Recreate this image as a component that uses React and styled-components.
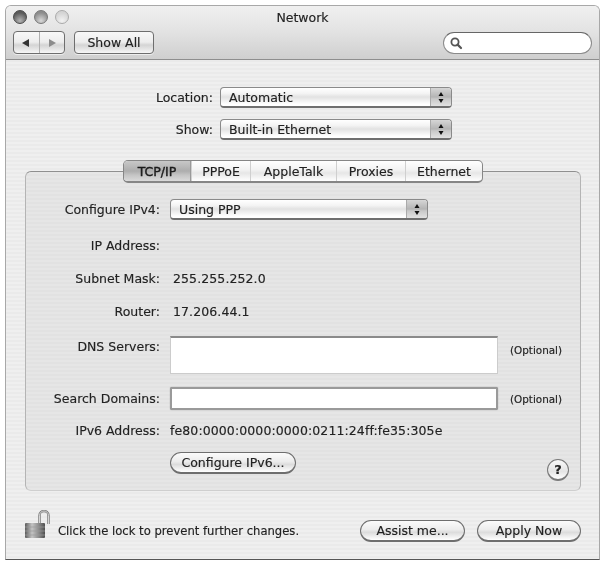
import React from "react";
import styled, { createGlobalStyle } from "styled-components";

const Global = createGlobalStyle`
  html, body { margin: 0; padding: 0; background: #fff; }
  body { font-family: "DejaVu Sans", "Liberation Sans", sans-serif; font-size: 12px; color: #222; -webkit-text-stroke: 0.15px #222; }
`;

const Page = styled.div`
  width: 604px;
  height: 562px;
  padding: 5px 4px 0 5px;
  box-sizing: border-box;
  overflow: hidden;
  filter: blur(0.45px);
`;

const Window = styled.div`
  width: 595px;
  height: 555px;
  box-sizing: border-box;
  border: 1px solid #a8a8a8;
  border-bottom-color: #555;
  border-radius: 6px 6px 0 0;
  display: flex;
  flex-direction: column;
  background: repeating-linear-gradient(#efefef 0 2px, #eaeaea 2px 4px);
`;

const TitleBar = styled.div`
  height: 54px;
  flex: none;
  box-sizing: border-box;
  padding: 3px 7px 0 7px;
  border-bottom: 1px solid #8e8e8e;
  border-radius: 5px 5px 0 0;
  background: linear-gradient(#f0f0f0, #e2e2e2 50%, #cfcfcf);
`;

const TitleRow = styled.div`
  display: grid;
  grid-template-columns: 1fr auto 1fr;
  align-items: center;
  height: 16px;
`;

const Lights = styled.div`
  display: flex;
  gap: 7px;
`;

const Light = styled.span`
  width: 14px;
  height: 14px;
  border-radius: 50%;
  box-sizing: border-box;
  border: 1px solid ${p => p.$edge};
  background: radial-gradient(circle at 50% 80%, ${p => p.$glow}, ${p => p.$tone} 70%);
`;

const Title = styled.div`
  font-size: 12.5px;
`;

const ToolRow = styled.div`
  display: flex;
  align-items: center;
  margin-top: 6px;
`;

const ToolButton = styled.div`
  height: 23px;
  box-sizing: border-box;
  border: 1px solid #6e6e6e;
  border-radius: 4px;
  background: linear-gradient(#f8f8f8, #ededed 48%, #d4d4d4 62%, #f6f6f6);
  display: flex;
  align-items: center;
  justify-content: center;
  box-shadow: 0 1px 0 rgba(255,255,255,.6);
  font-size: 12.5px;
`;

const NavButton = styled(ToolButton)`
  width: 52px;
`;

const NavPart = styled.span`
  flex: 1;
  height: 100%;
  display: flex;
  align-items: center;
  justify-content: center;
  & + & { border-left: 1px solid #b0b0b0; }
`;

const ShowAll = styled(ToolButton)`
  width: 80px;
  margin-left: 9px;
`;

const SearchField = styled.div`
  width: 149px;
  height: 22px;
  margin-left: auto;
  box-sizing: border-box;
  border: 1px solid #8a8a8a;
  border-top-color: #666;
  border-radius: 11px;
  background: #fff;
  display: flex;
  align-items: center;
  padding-left: 5px;
`;

const Content = styled.div`
  flex: 1;
  display: flex;
  flex-direction: column;
  min-height: 0;
`;

const TopForm = styled.div`
  padding-top: 27px;
  display: flex;
  flex-direction: column;
  gap: 11px;
`;

const TopRow = styled.div`
  display: grid;
  grid-template-columns: 207px auto;
  column-gap: 7px;
  align-items: center;
  justify-content: start;
  height: 21px;
`;

const TopLabel = styled.label`
  text-align: right;
  font-size: 12.5px;
  white-space: nowrap;
`;

const Select = styled.div`
  width: ${p => p.$w}px;
  height: 21px;
  box-sizing: border-box;
  border: 1px solid #8a8a8a;
  border-bottom: 2px solid #6f6f6f;
  border-radius: 4px;
  display: flex;
  align-items: center;
  padding-left: 8px;
  background: linear-gradient(#ffffff, #f4f4f4 30%, #e2e2e2 50%, #ffffff 90%);
  position: relative;
  overflow: hidden;
  font-size: 12.5px;
`;

const Stepper = styled.span`
  position: absolute;
  right: 0;
  top: 0;
  bottom: 0;
  width: 20px;
  border-left: 1px solid #aaa;
  background: linear-gradient(#d6d6d6, #b4b4b4 50%, #c8c8c8 60%, #e2e2e2);
  display: flex;
  align-items: center;
  justify-content: center;
`;

const Panel = styled.div`
  margin: 31px 18px 0 19px;
  height: 320px;
  box-sizing: border-box;
  border: 1px solid #b4b4b4;
  border-top-color: #8f8f8f;
  border-bottom-color: #cfcfcf;
  border-radius: 6px;
  background: repeating-linear-gradient(#e6e6e6 0 2px, #e2e2e2 2px 4px);
  display: flex;
  flex-direction: column;
`;

const Tabs = styled.div`
  display: flex;
  align-self: flex-start;
  height: 23px;
  margin: -12px 0 0 97px;
  box-sizing: border-box;
  border: 1px solid #868686;
  border-bottom-width: 2px;
  border-radius: 5px;
  overflow: hidden;
  background: linear-gradient(#ffffff, #f2f2f2 45%, #e6e6e6 60%, #ffffff);
`;

const Tab = styled.div`
  width: ${p => p.$w}px;
  box-sizing: border-box;
  display: flex;
  align-items: center;
  justify-content: center;
  font-size: 12.5px;
  border-left: ${p => (p.$first ? "none" : "1px solid #cfcfcf")};
  ${p => p.$active && "background: linear-gradient(#c8c8c8, #adadad 50%, #c4c4c4 70%, #dadada); border-right: 1px solid #999; -webkit-text-stroke: 0.35px #111;"}
`;

const Form = styled.div`
  display: flex;
  flex-direction: column;
  flex: 1;
`;

const Row = styled.div`
  display: grid;
  grid-template-columns: 134px 1fr;
  column-gap: 10px;
  margin-top: ${p => p.$top}px;
  align-items: ${p => (p.$start ? "start" : "center")};
  min-height: 21px;
`;

const Label = styled.div`
  text-align: right;
  font-size: 12.5px;
  white-space: nowrap;
  ${p => p.$start && "padding-top: 3px;"}
`;

const Value = styled.div`
  padding-left: ${p => (p.$flush ? 0 : 3)}px;
  font-size: 12.5px;
  letter-spacing: 0.1px;
`;

const FieldCell = styled.div`
  display: flex;
  align-items: ${p => (p.$start ? "flex-start" : "center")};
  gap: 12px;
`;

const Field = styled.div`
  width: 328px;
  height: ${p => p.$h}px;
  box-sizing: border-box;
  background: #fff;
  border: 1px solid #ccc;
  border-top: 2px solid #8a8a8a;
  ${p => p.$focus && "border: 2px solid #9a9a9a; border-radius: 2px; box-shadow: 0 0 1px #777;"}
`;

const Optional = styled.span`
  font-size: 10.4px;
  ${p => p.$start && "padding-top: 8px;"}
`;

const ActionRow = styled.div`
  display: flex;
  align-items: flex-end;
  justify-content: space-between;
  margin-top: 11px;
  padding: 0 11px 0 144px;
`;

const Pill = styled.div`
  width: ${p => p.$w}px;
  height: 22px;
  box-sizing: border-box;
  border: 1px solid #6e6e6e;
  border-bottom-width: 2px;
  border-radius: 11px;
  display: flex;
  align-items: center;
  justify-content: center;
  font-size: 12.5px;
  background: linear-gradient(#fbfbfb, #ececec 45%, #dcdcdc 60%, #ffffff);
  white-space: nowrap;
`;

const Help = styled.div`
  width: 22px;
  height: 22px;
  box-sizing: border-box;
  border: 1px solid #7a7a7a;
  border-bottom-width: 2px;
  border-radius: 50%;
  margin-bottom: -7px;
  background: linear-gradient(#fafafa, #e4e4e4 60%, #ffffff);
  font-weight: bold;
  font-size: 13px;
  display: flex;
  align-items: center;
  justify-content: center;
`;

const Footer = styled.div`
  display: flex;
  align-items: flex-end;
  padding: 19px 18px 0 18px;
`;

const LockNote = styled.div`
  display: flex;
  align-items: flex-end;
  gap: 7px;
  flex: 1;
`;

const Note = styled.span`
  font-size: 11.6px;
  margin-bottom: 1px;
`;

const FooterButtons = styled.div`
  display: flex;
  gap: 12px;
  margin-bottom: -3px;
`;

const Tri = ({ dir, fill }) => (
  <svg width="10" height="10" viewBox="0 0 10 10">
    <path d={dir === "l" ? "M8 1 L1 5 L8 9 Z" : "M2 1 L9 5 L2 9 Z"} fill={fill} />
  </svg>
);

const StepIcon = () => (
  <svg width="8" height="15" viewBox="0 0 8 15">
    <path d="M4 2 L6.5 6 L1.5 6 Z M4 13 L6.5 9 L1.5 9 Z" fill="#111" />
  </svg>
);

const SearchIcon = () => (
  <svg width="14" height="14" viewBox="0 0 14 14" fill="none">
    <circle cx="6" cy="6" r="3.6" stroke="#555" strokeWidth="1.8" />
    <path d="M8.6 8.6 L12 12" stroke="#555" strokeWidth="2.2" strokeLinecap="round" />
  </svg>
);

const LockIcon = () => (
  <svg width="27" height="29" viewBox="0 0 27 29">
    <defs>
      <linearGradient id="lockBody" x1="0" x2="1" y1="0" y2="0">
        <stop offset="0" stopColor="#5c5c5c" />
        <stop offset="0.35" stopColor="#c4c4c4" />
        <stop offset="0.7" stopColor="#8a8a8a" />
        <stop offset="1" stopColor="#4e4e4e" />
      </linearGradient>
    </defs>
    <path d="M15.5 15 V5.5 A4.5 4.5 0 0 1 24.5 5.5 V14" fill="none" stroke="#777" strokeWidth="2.4" />
    <path d="M15.5 15 V5.5 A4.5 4.5 0 0 1 24.5 5.5 V14" fill="none" stroke="#eee" strokeWidth="0.8" />
    <rect x="1" y="13" width="20" height="15" rx="1" fill="url(#lockBody)" />
    <path d="M1 17 H21 M1 21 H21 M1 25 H21" stroke="#9c9c9c" strokeWidth="0.7" />
  </svg>
);

const SelectBox = ({ w, children }) => (
  <Select $w={w}>
    {children}
    <Stepper>
      <StepIcon />
    </Stepper>
  </Select>
);

export default function App() {
  return (
    <Page>
      <Global />
      <Window>
        <TitleBar>
          <TitleRow>
            <Lights>
              <Light $tone="#5a5a5a" $glow="#b4b4b4" $edge="#4a4a4a" />
              <Light $tone="#8c8c8c" $glow="#d8d8d8" $edge="#777" />
              <Light $tone="#d4d4d4" $glow="#f2f2f2" $edge="#aaa" />
            </Lights>
            <Title>Network</Title>
            <span />
          </TitleRow>
          <ToolRow>
            <NavButton>
              <NavPart><Tri dir="l" fill="#333" /></NavPart>
              <NavPart><Tri dir="r" fill="#8c8c8c" /></NavPart>
            </NavButton>
            <ShowAll>Show All</ShowAll>
            <SearchField><SearchIcon /></SearchField>
          </ToolRow>
        </TitleBar>
        <Content>
          <TopForm>
            <TopRow>
              <TopLabel>Location:</TopLabel>
              <SelectBox w={232}>Automatic</SelectBox>
            </TopRow>
            <TopRow>
              <TopLabel>Show:</TopLabel>
              <SelectBox w={232}>Built-in Ethernet</SelectBox>
            </TopRow>
          </TopForm>
          <Panel>
            <Tabs>
              <Tab $w={67} $first $active>TCP/IP</Tab>
              <Tab $w={59}>PPPoE</Tab>
              <Tab $w={86}>AppleTalk</Tab>
              <Tab $w={69}>Proxies</Tab>
              <Tab $w={77}>Ethernet</Tab>
            </Tabs>
            <Form>
              <Row $top={16}>
                <Label>Configure IPv4:</Label>
                <SelectBox w={258}>Using PPP</SelectBox>
              </Row>
              <Row $top={15}>
                <Label>IP Address:</Label>
                <Value />
              </Row>
              <Row $top={12}>
                <Label>Subnet Mask:</Label>
                <Value>255.255.252.0</Value>
              </Row>
              <Row $top={12}>
                <Label>Router:</Label>
                <Value>17.206.44.1</Value>
              </Row>
              <Row $top={14} $start>
                <Label $start>DNS Servers:</Label>
                <FieldCell $start>
                  <Field $h={38} />
                  <Optional $start>(Optional)</Optional>
                </FieldCell>
              </Row>
              <Row $top={13}>
                <Label>Search Domains:</Label>
                <FieldCell>
                  <Field $h={23} $focus />
                  <Optional>(Optional)</Optional>
                </FieldCell>
              </Row>
              <Row $top={10}>
                <Label>IPv6 Address:</Label>
                <Value $flush>fe80:0000:0000:0000:0211:24ff:fe35:305e</Value>
              </Row>
              <ActionRow>
                <Pill $w={126}>Configure IPv6...</Pill>
                <Help>?</Help>
              </ActionRow>
            </Form>
          </Panel>
          <Footer>
            <LockNote>
              <LockIcon />
              <Note>Click the lock to prevent further changes.</Note>
            </LockNote>
            <FooterButtons>
              <Pill $w={105}>Assist me...</Pill>
              <Pill $w={104}>Apply Now</Pill>
            </FooterButtons>
          </Footer>
        </Content>
      </Window>
    </Page>
  );
}
